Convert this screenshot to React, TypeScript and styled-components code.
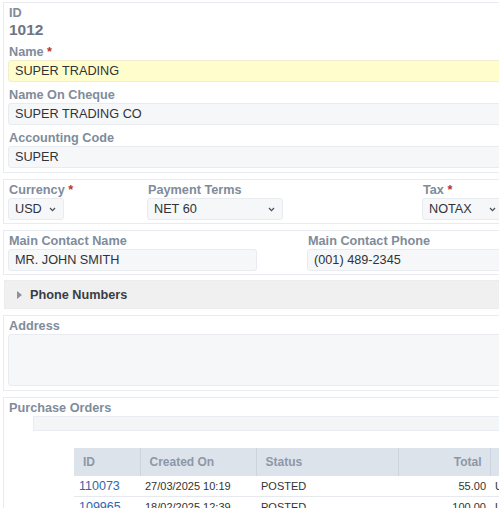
import React from "react";
import styled, { createGlobalStyle } from "styled-components";

const GlobalStyle = createGlobalStyle`
  html, body {
    margin: 0;
    padding: 0;
    background: #fff;
    overflow: hidden;
  }
  body {
    font-family: "Liberation Sans", Arial, sans-serif;
  }
`;

const Page = styled.div`
  width: 640px;
  padding: 2px 0 0 3px;
  display: flex;
  flex-direction: column;
  gap: 6px;
`;

const Panel = styled.section<{ $top?: number; $bottom?: number }>`
  border: 1px solid #e8ebf0;
  padding: ${(p) => p.$top ?? 3}px 4px ${(p) => p.$bottom ?? 3}px 4px;
  background: #fff;
`;

const Label = styled.div`
  font-size: 12.7px;
  font-weight: bold;
  line-height: 15px;
  color: #808c9b;
  padding-left: 1px;
  white-space: nowrap;
`;

const Required = styled.span`
  color: #b8362e;
`;

const BigValue = styled.div`
  font-size: 15.5px;
  font-weight: bold;
  line-height: 18px;
  color: #6c7683;
  padding-left: 1px;
  margin-bottom: 6px;
`;

const Field = styled.div`
  & + & {
    margin-top: 6px;
  }
`;

const Input = styled.div<{ $highlight?: boolean; $width?: number }>`
  box-sizing: border-box;
  height: 22px;
  width: ${(p) => (p.$width ? `${p.$width}px` : "100%")};
  padding: 0 6px;
  display: flex;
  align-items: center;
  font-size: 12.7px;
  color: #2f3338;
  background: ${(p) => (p.$highlight ? "#fffdcc" : "#f6f7f9")};
  border: 1px solid ${(p) => (p.$highlight ? "#f1efcf" : "#e8ebef")};
  border-radius: 3px;
  white-space: nowrap;
`;

const TextArea = styled(Input)`
  height: 52px;
`;

const Select = styled(Input)`
  justify-content: space-between;
  padding: 0 7px 0 6px;
`;

const Chevron = () => (
  <svg width="7" height="5" viewBox="0 0 7 5">
    <path d="M1 1l2.5 2.6L6 1" fill="none" stroke="#4b4f55" strokeWidth="1.3" />
  </svg>
);

const ThreeCols = styled.div`
  display: grid;
  grid-template-columns: 139px 275px 1fr;
`;

const TwoCols = styled.div`
  display: grid;
  grid-template-columns: 299px 1fr;
`;

const Collapsible = styled.div`
  box-sizing: border-box;
  height: 29px;
  margin: -1px 0 0 1px;
  display: flex;
  align-items: center;
  gap: 8px;
  padding-left: 12px;
  background: #f0f0f0;
  border: 1px solid #ececec;
  font-size: 12.7px;
  font-weight: bold;
  color: #383d45;
`;

const Caret = styled.span`
  width: 0;
  height: 0;
  border-left: 5px solid #8c9097;
  border-top: 4px solid transparent;
  border-bottom: 4px solid transparent;
`;

const GridToolbar = styled.div`
  margin: 0 0 0 25px;
  height: 13px;
  background: #f4f5f7;
  border: 1px solid #e8ebef;
  border-right: none;
`;

const Table = styled.table`
  margin: 17px 0 0 66px;
  border-collapse: collapse;
  table-layout: fixed;
  width: 560px;
`;

const Th = styled.th<{ $w: number; $right?: boolean }>`
  box-sizing: border-box;
  width: ${(p) => p.$w}px;
  height: 28px;
  padding: 0 ${(p) => (p.$right ? "8px" : "9px")};
  background: #dde3ea;
  border-right: 1px solid #ccd4de;
  color: #8c98a8;
  font-size: 12px;
  font-weight: bold;
  text-align: ${(p) => (p.$right ? "right" : "left")};
  white-space: nowrap;
`;

const Td = styled.td<{ $right?: boolean }>`
  height: 20px;
  padding: 0 ${(p) => (p.$right ? "4px" : "5px")};
  border-bottom: 1px solid #e6e9ee;
  color: #333;
  font-size: 11px;
  text-align: ${(p) => (p.$right ? "right" : "left")};
  white-space: nowrap;
  overflow: hidden;
`;

const Link = styled.span`
  color: #3565ad;
  font-size: 12.5px;
`;

const orders = [
  { id: "110073", created: "27/03/2025 10:19", status: "POSTED", total: "55.00", cur: "USD" },
  { id: "109965", created: "18/02/2025 12:39", status: "POSTED", total: "100.00", cur: "USD" },
];

const App = () => {
  return (
    <>
      <GlobalStyle />
      <Page>
        <Panel $bottom={4}>
          <Label>ID</Label>
          <BigValue>1012</BigValue>
          <Field>
            <Label>
              Name <Required>*</Required>
            </Label>
            <Input $highlight>SUPER TRADING</Input>
          </Field>
          <Field>
            <Label>Name On Cheque</Label>
            <Input>SUPER TRADING CO</Input>
          </Field>
          <Field>
            <Label>Accounting Code</Label>
            <Input>SUPER</Input>
          </Field>
        </Panel>

        <Panel>
          <ThreeCols>
            <div>
              <Label>
                Currency <Required>*</Required>
              </Label>
              <Select $width={56}>
                USD <Chevron />
              </Select>
            </div>
            <div>
              <Label>Payment Terms</Label>
              <Select $width={136}>
                NET 60 <Chevron />
              </Select>
            </div>
            <div>
              <Label>
                Tax <Required>*</Required>
              </Label>
              <Select $width={82}>
                NOTAX <Chevron />
              </Select>
            </div>
          </ThreeCols>
        </Panel>

        <Panel>
          <TwoCols>
            <div>
              <Label>Main Contact Name</Label>
              <Input $width={249}>MR. JOHN SMITH</Input>
            </div>
            <div>
              <Label>Main Contact Phone</Label>
              <Input>(001) 489-2345</Input>
            </div>
          </TwoCols>
        </Panel>

        <Collapsible>
          <Caret />
          Phone Numbers
        </Collapsible>

        <Panel $bottom={4}>
          <Label>Address</Label>
          <TextArea />
        </Panel>

        <Panel>
          <Label>Purchase Orders</Label>
          <GridToolbar />
          <Table>
            <thead>
              <tr>
                <Th $w={66}>ID</Th>
                <Th $w={116}>Created On</Th>
                <Th $w={142}>Status</Th>
                <Th $w={92} $right>
                  Total
                </Th>
                <Th $w={144}>Currency</Th>
              </tr>
            </thead>
            <tbody>
              {orders.map((o) => (
                <tr key={o.id}>
                  <Td>
                    <Link>{o.id}</Link>
                  </Td>
                  <Td>{o.created}</Td>
                  <Td>{o.status}</Td>
                  <Td $right>{o.total}</Td>
                  <Td>{o.cur}</Td>
                </tr>
              ))}
            </tbody>
          </Table>
        </Panel>
      </Page>
    </>
  );
};

export default App;
